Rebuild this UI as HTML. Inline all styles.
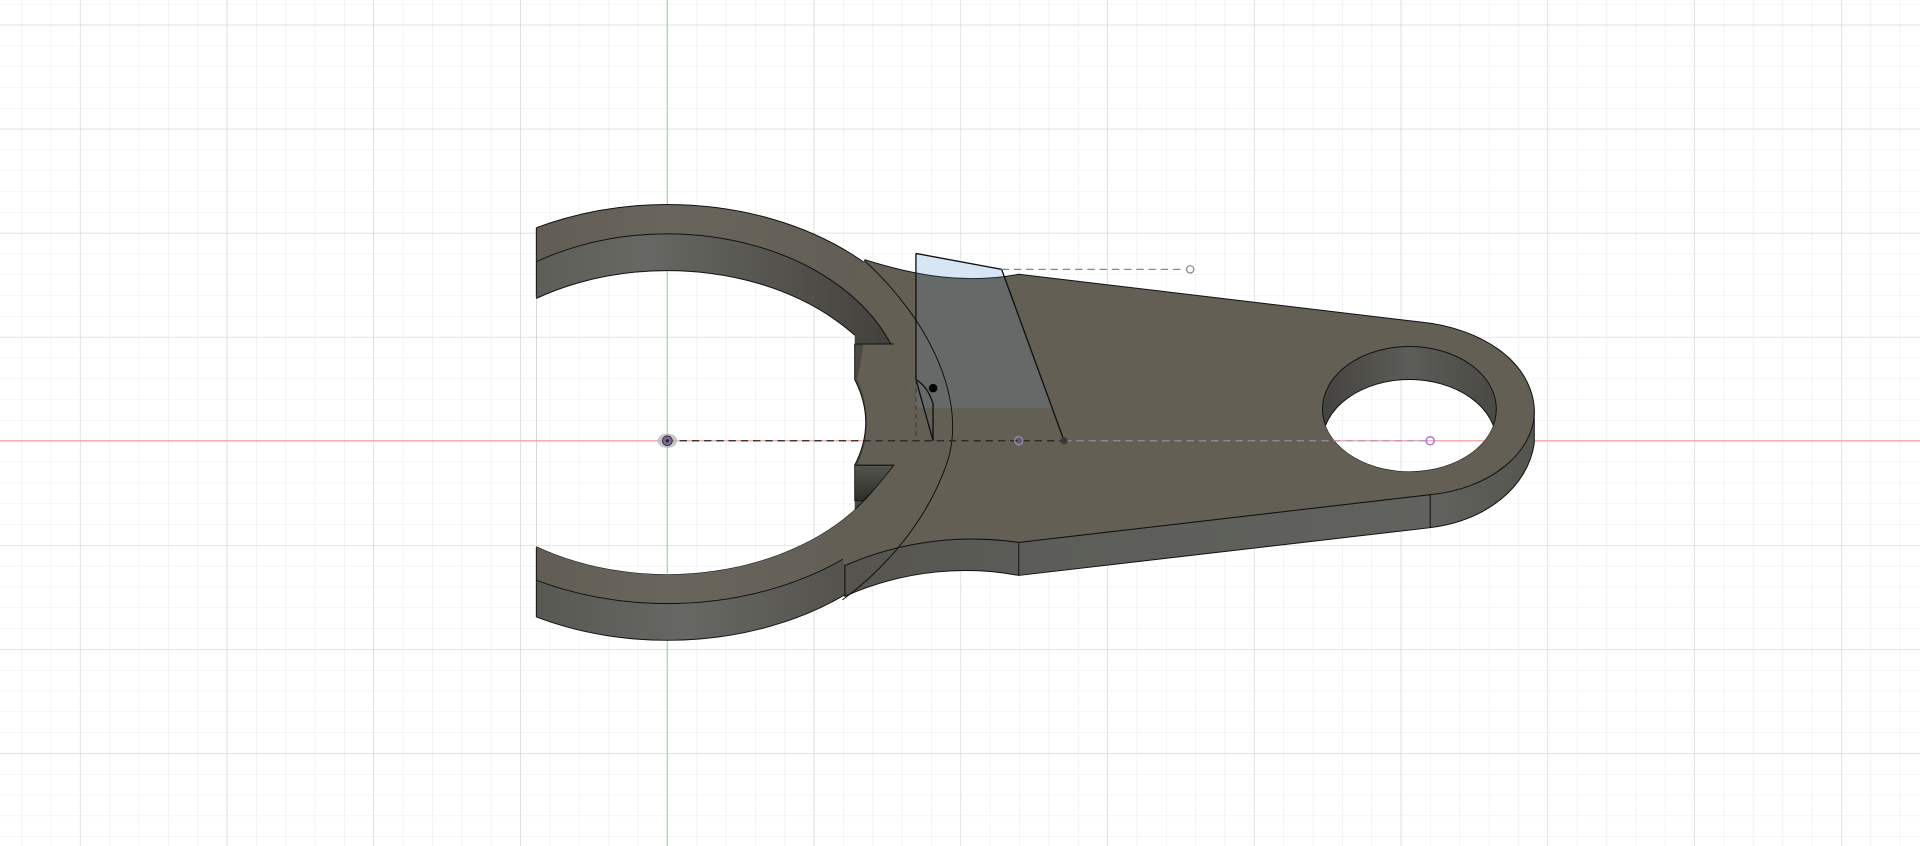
<!DOCTYPE html>
<html><head><meta charset="utf-8"><style>
html,body{margin:0;padding:0;background:#fff;overflow:hidden}
svg{display:block}
</style></head><body>
<svg width="1920" height="846" viewBox="0 0 1568 691" preserveAspectRatio="none" xmlns="http://www.w3.org/2000/svg" xmlns:xlink="http://www.w3.org/1999/xlink">
<defs>
<pattern id="minor" x="65.3" y="20.2" width="23.97" height="17" patternUnits="userSpaceOnUse">
<path d="M0,0 V17 M0,0 H23.97" stroke="#ececec" stroke-width="0.9" fill="none"/>
</pattern>
<pattern id="major" x="65.3" y="20.2" width="119.85" height="85" patternUnits="userSpaceOnUse">
<path d="M0,0 V85 M0,0 H119.85" stroke="#cfcfcf" stroke-width="0.9" fill="none"/>
</pattern>
<g id="bg">
<rect width="1568" height="691" fill="#fff"/>
<rect width="1568" height="691" fill="url(#minor)"/>
<rect width="1568" height="691" fill="url(#major)"/>
<line x1="0" y1="360" x2="1568" y2="360" stroke="#f3a5a5" stroke-width="1"/>
<line x1="545" y1="0" x2="545" y2="691" stroke="#8fe48f" stroke-width="1"/>
</g>
<clipPath id="cx"><rect x="438" y="0" width="1200" height="700"/></clipPath>
<clipPath id="cinner"><ellipse cx="545" cy="330" rx="195" ry="139"/></clipPath>
<clipPath id="cshift"><ellipse cx="545" cy="360" rx="195" ry="139"/></clipPath>
<clipPath id="cnotch"><path d="M0,0 H698 V310 Q716,345 698,380 V700 H0 Z"/></clipPath>
<clipPath id="cstroke"><path d="M438,0 H731 V281 H698 V380 H731 V700 H438 Z"/></clipPath>
<clipPath id="chole"><ellipse cx="1151" cy="334" rx="71" ry="51"/></clipPath>
<clipPath id="chole2"><ellipse cx="1151" cy="361" rx="71" ry="51"/></clipPath>
<linearGradient id="side" x1="438" x2="1253" y1="0" y2="0" gradientUnits="userSpaceOnUse">
<stop offset="0" stop-color="#585853"/><stop offset="0.15" stop-color="#676863"/><stop offset="0.3" stop-color="#55534e"/><stop offset="0.5" stop-color="#5c5d58"/><stop offset="0.9" stop-color="#61625d"/><stop offset="1" stop-color="#55554f"/>
</linearGradient>
<linearGradient id="topg" x1="438" x2="1253" y1="0" y2="0" gradientUnits="userSpaceOnUse">
<stop offset="0" stop-color="#625d54"/><stop offset="0.13" stop-color="#69655c"/><stop offset="0.35" stop-color="#625d54"/><stop offset="1" stop-color="#645f55"/>
</linearGradient>
<linearGradient id="wall" x1="350" x2="740" y1="0" y2="0" gradientUnits="userSpaceOnUse">
<stop offset="0" stop-color="#55534e"/><stop offset="0.45" stop-color="#676863"/><stop offset="0.85" stop-color="#4c4a45"/><stop offset="1" stop-color="#3f3e3a"/>
</linearGradient>
<linearGradient id="wall2" x1="1080" x2="1222" y1="0" y2="0" gradientUnits="userSpaceOnUse">
<stop offset="0" stop-color="#45433f"/><stop offset="0.5" stop-color="#5c5d58"/><stop offset="1" stop-color="#4a4944"/>
</linearGradient>
<linearGradient id="blk" x1="0" x2="0" y1="380" y2="409" gradientUnits="userSpaceOnUse">
<stop offset="0" stop-color="#55554f"/><stop offset="1" stop-color="#2e2e2b"/>
</linearGradient>
</defs>
<use xlink:href="#bg" href="#bg"/>

<path d="M748,207 L818,220 L869,360 L762,360 L762,330 Q758,316 748,310 Z" fill="#eaf4fc"/>

<g clip-path="url(#cx)">
<ellipse cx="545" cy="360" rx="228" ry="163" fill="url(#side)" stroke="#111" stroke-width="0.8"/>
</g>
<path d="M690,460 C740,440 790,437 832,443 L1168,404 C1215,398 1248,370 1253,335 L1253,362 C1248,397 1215,425 1168,431 L832,470 C790,462 740,465 690,487 Z" fill="url(#side)" stroke="#111" stroke-width="0.8"/>
<line x1="832" y1="443" x2="832" y2="470" stroke="#111" stroke-width="0.8"/>
<line x1="1168" y1="404" x2="1168" y2="431" stroke="#111" stroke-width="0.8"/>
<line x1="690" y1="460" x2="690" y2="487" stroke="#111" stroke-width="0.8"/>

<g clip-path="url(#cx)">
<ellipse cx="545" cy="330" rx="228" ry="163" fill="url(#topg)" stroke="#111" stroke-width="0.8"/>
</g>
<path d="M650,330 L706,212 C750,226 790,232 832,224 L1160,263 C1210,268 1250,295 1253,333 C1255,370 1215,400 1168,404 L832,443 C790,437 740,440 690,462 Z" fill="#645f55"/>
<path d="M706,212 C750,226 790,232 832,224 L1160,263 C1210,268 1250,295 1253,333 C1255,370 1215,400 1168,404 L832,443 C790,437 740,440 690,462" fill="none" stroke="#111" stroke-width="0.8"/>

<g clip-path="url(#cx)">
<g clip-path="url(#cinner)"><rect x="300" y="150" width="500" height="350" fill="url(#wall)"/></g>
<g clip-path="url(#cstroke)"><ellipse cx="545" cy="330" rx="195" ry="139" fill="none" stroke="#111" stroke-width="0.8"/></g>
<g clip-path="url(#cinner)"><g clip-path="url(#cnotch)"><g clip-path="url(#cshift)">
<use xlink:href="#bg" href="#bg"/>
</g><ellipse cx="545" cy="360" rx="195" ry="139" fill="none" stroke="#111" stroke-width="0.8"/></g></g>
</g>
<g clip-path="url(#cinner)">
<path d="M705,281 L745,281 L745,380 L700,380 Q716,345 700,310 Z" fill="#645f55"/>
<path d="M698,281 L705,281 Q703,298 700,310 L698,310 Z" fill="#4a4944"/>
</g>
<path d="M698,380 L730,380 Q716,398 705,409 L698,409 Z" fill="url(#blk)" stroke="#111" stroke-width="0.7"/>
<path d="M698,281 L730,281 M698,281 V310 Q716,345 698,380 M698,380 L730,380" fill="none" stroke="#111" stroke-width="0.8"/>
<line x1="438" y1="186" x2="438" y2="243" stroke="#111" stroke-width="0.8"/>
<line x1="438" y1="447" x2="438" y2="504" stroke="#111" stroke-width="0.8"/>

<ellipse cx="1151" cy="334" rx="71" ry="51" fill="url(#wall2)" stroke="#111" stroke-width="0.8"/>
<g clip-path="url(#chole)"><g clip-path="url(#chole2)"><use xlink:href="#bg" href="#bg"/></g><ellipse cx="1151" cy="361" rx="71" ry="51" fill="none" stroke="#111" stroke-width="0.8"/></g>

<path d="M748,207 L818,220 L859,333 L748,333 Z" fill="rgba(110,160,205,0.16)"/>
<path d="M748,207 L818,220 L869,360 M762,360 L762,330 Q758,316 748,310 Z M748,310 V207" fill="none" stroke="#111" stroke-width="1.1"/>
<path d="M706,213 C760,262 792,330 772,382 C755,428 722,465 688,490" fill="none" stroke="#111" stroke-width="0.8"/>
<path d="M748,310 V360" stroke="#333" stroke-width="0.7" stroke-dasharray="4,3"/>
<circle cx="762" cy="317" r="3.5" fill="#000"/>

<line x1="545" y1="360" x2="869" y2="360" stroke="#2a2222" stroke-width="1.1" stroke-dasharray="6,4"/>
<line x1="869" y1="360" x2="1168" y2="360" stroke="#a592b8" stroke-width="1" stroke-dasharray="6,4" opacity="0.8"/>
<line x1="818" y1="220" x2="968" y2="220" stroke="#888" stroke-width="1" stroke-dasharray="6,4"/>
<circle cx="972" cy="220" r="3" fill="#fff" stroke="#888" stroke-width="1"/>
<circle cx="832" cy="360" r="3.3" fill="none" stroke="#a08ac8" stroke-width="1"/>
<circle cx="1168" cy="360" r="3.3" fill="none" stroke="#a07ad8" stroke-width="1.2"/>
<circle cx="869" cy="360" r="3" fill="#3a3a38"/>
<ellipse cx="545" cy="360" rx="8" ry="6" fill="#bbb" opacity="0.8"/>
<circle cx="545" cy="360" r="4" fill="#7a6a9a" stroke="#333" stroke-width="0.8"/>
<circle cx="545" cy="360" r="1.3" fill="#222"/>
</svg>
</body></html>
